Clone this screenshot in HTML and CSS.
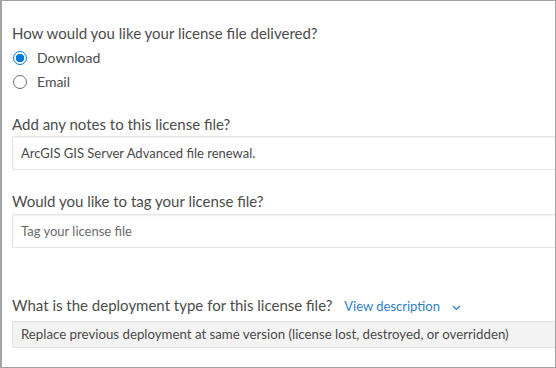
FILE: index.html
```html
<!DOCTYPE html>
<html lang="en">
<head>
  <meta charset="UTF-8" />
  <title>License file options</title>
  <link rel="stylesheet" href="styles.css">
</head>
<body>

<div class="frame">
  <form class="license-form">
    <!-- Delivery -->
    <div class="field delivery">
      <div class="question">How would you like your license file delivered?</div>
      <div class="radio-group">
        <label class="radio"><span class="dot checked"></span>Download</label>
        <label class="radio"><span class="dot"></span>Email</label>
      </div>
    </div>

    <!-- Notes -->
    <div class="field notes">
      <div class="question">Add any notes to this license file?</div>
      <div class="text-input">ArcGIS GIS Server Advanced file renewal.</div>
    </div>

    <!-- Tags -->
    <div class="field tags">
      <div class="question">Would you like to tag your license file?</div>
      <div class="text-input placeholder">Tag your license file</div>
    </div>

    <!-- Deployment -->
    <div class="field deployment">
      <div class="question">
        What is the deployment type for this license file?
        <span class="view-desc">View description
          <svg class="chevron" width="9" height="6" viewBox="0 0 9 6"><path d="M1 1l3.5 3.5L8 1" fill="none" stroke="#2f7fc6" stroke-width="1.2"/></svg>
        </span>
      </div>
      <div class="select">Replace previous deployment at same version (license lost, destroyed, or overridden)</div>
    </div>
  </form>
</div>

</body>
</html>
```

FILE: styles.css
```css
body {
  margin: 0;
  font-family: 'Lato', 'Open Sans', sans-serif;
  color: #4c4c4c;
  background: #fff;
}
.frame {
  box-sizing: border-box;
  width: 556px;
  height: 368px;
  border: 1px solid #a3a3a3;
  border-left-width: 2px;
  overflow: hidden;
  padding: 22px 0 0 10px;
}
.license-form {
  width: 620px;
}
.question {
  font-size: 15px;
  line-height: 21px;
  white-space: nowrap;
}
.radio-group {
  margin-top: 2px;
}
.radio {
  display: flex;
  align-items: center;
  font-size: 14px;
  line-height: 24px;
}
.dot {
  box-sizing: border-box;
  width: 14px;
  height: 14px;
  border: 1px solid #6e6e6e;
  border-radius: 50%;
  margin: 0 10px 0 1px;
  background: #fff;
}
.dot.checked {
  border: 1.5px solid #0079e1;
  background: radial-gradient(circle, #0079e1 0 4px, #fff 4.5px);
}
.notes {
  margin-top: 20px;
}
.tags {
  margin-top: 21px;
}
.tags .text-input {
  margin-top: 2px;
}
.deployment {
  margin-top: 47px;
}
.text-input {
  box-sizing: border-box;
  height: 34px;
  margin-top: 1px;
  padding: 0 8px;
  border: 1px solid #e4e4e4;
  border-radius: 2px;
  box-shadow: inset 0 1px 2px rgba(0,0,0,0.06);
  font-size: 13px;
  line-height: 32px;
  color: #4a4a4a;
}
.text-input.placeholder {
  color: #6a6a6a;
}
.view-desc {
  margin-left: 8px;
  font-size: 13px;
  color: #2f7fc6;
}
.chevron {
  margin-left: 9px;
  vertical-align: middle;
}
.select {
  box-sizing: border-box;
  height: 27px;
  margin-top: 4px;
  padding: 0 8px;
  border: 1px solid #e2e2e2;
  border-radius: 2px;
  background: #f3f3f3;
  font-size: 13.25px;
  line-height: 25px;
  color: #4a4a4a;
}
```
